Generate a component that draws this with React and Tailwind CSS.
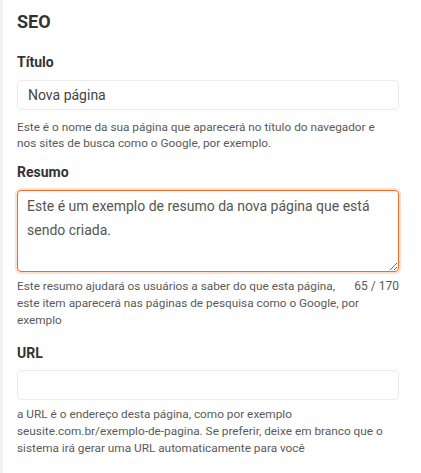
import React, { useState } from "react";

function Field({ label, gap = "mb-[8px]", children }) {
  return (
    <div className="flex flex-col">
      <label
        className={`text-[14px] font-bold text-[#333] leading-[20px] ${gap}`}
      >
        {label}
      </label>
      {children}
    </div>
  );
}

export default function App() {
  const [titulo, setTitulo] = useState("Nova página");
  const [resumo, setResumo] = useState(
    "Este é um exemplo de resumo da nova página que está sendo criada."
  );
  const [url, setUrl] = useState("");

  return (
    <div
      className="min-h-[473px] bg-white border-l-[3px] border-[#f2f2f2] pl-[14px] pr-[22px] pt-[10px]"
      style={{ fontFamily: "Roboto, 'Liberation Sans', sans-serif" }}
    >
      <h2 className="text-[18px] font-bold text-[#333] leading-[24px] mb-[18px]">
        SEO
      </h2>

      <Field label="Título">
        <input
          type="text"
          value={titulo}
          onChange={(e) => setTitulo(e.target.value)}
          className="h-[30px] px-[10px] rounded-[4px] border border-[#ebebeb] text-[14px] text-[#444] outline-none"
        />
        <p className="mt-[9px] max-w-[370px] text-[11.8px] leading-[16px] text-[#5a5a5a]">
          Este é o nome da sua página que aparecerá no título do navegador e
          nos sites de busca como o Google, por exemplo.
        </p>
      </Field>

      <div className="mt-[11px]">
        <Field label="Resumo">
          <textarea
            value={resumo}
            onChange={(e) => setResumo(e.target.value)}
            className="h-[82px] px-[9px] py-[3px] rounded-[4px] border border-[#f26a25] ring-2 ring-[#fde0d0] text-[14px] leading-[24px] text-[#555] outline-none"
          />
          <div className="mt-[6px] text-[11.8px] leading-[17px] text-[#5a5a5a]">
            <span className="float-right ml-[14px] text-[12px]">
              {resumo.length} / 170
            </span>
            <span>
              Este resumo ajudará os usuários a saber do que esta página, este
              item aparecerá nas páginas de pesquisa como o Google, por exemplo
            </span>
          </div>
        </Field>
      </div>

      <div className="mt-[14px]">
        <Field label="URL" gap="mb-[7px]">
          <input
            type="text"
            value={url}
            onChange={(e) => setUrl(e.target.value)}
            className="h-[30px] px-[10px] rounded-[4px] border border-[#ebebeb] text-[14px] text-[#444] outline-none"
          />
          <p className="mt-[6px] text-[11.8px] leading-[17px] text-[#5a5a5a]">
            a URL é o endereço desta página, como por exemplo
            seusite.com.br/exemplo-de-pagina. Se preferir, deixe em branco que o
            sistema irá gerar uma URL automaticamente para você
          </p>
        </Field>
      </div>
    </div>
  );
}
